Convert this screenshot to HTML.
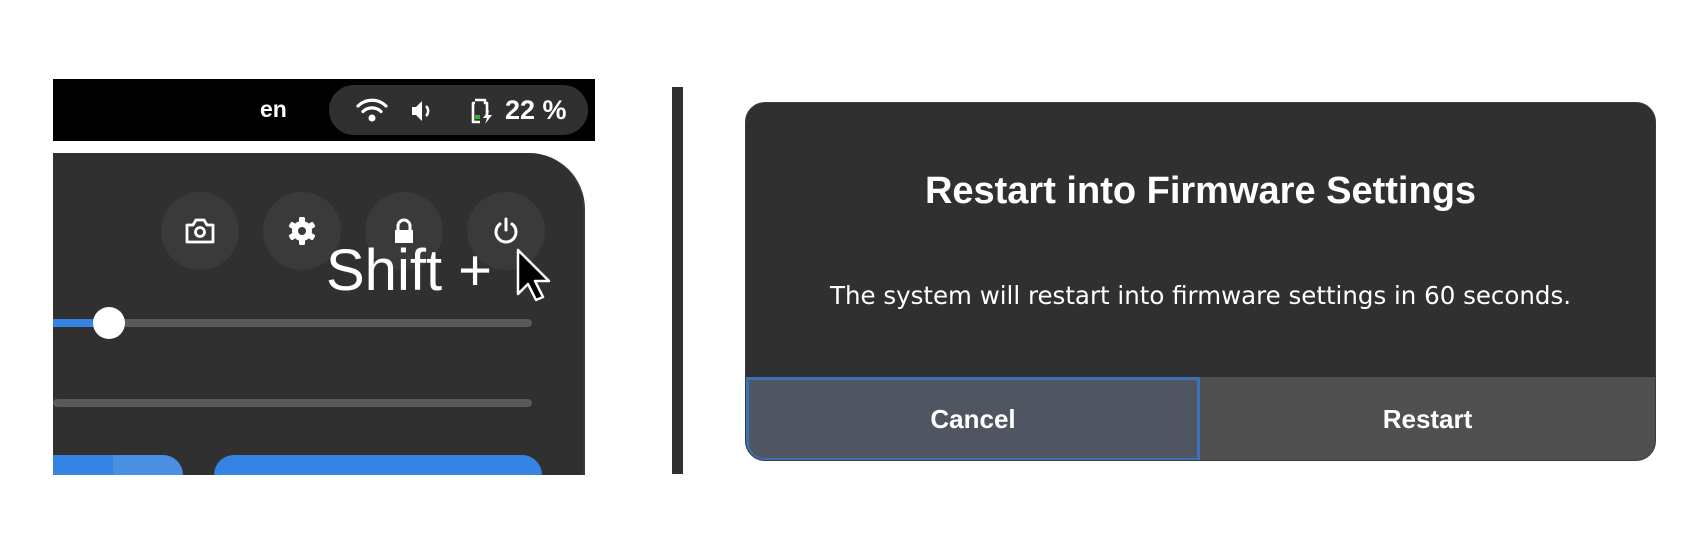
<!DOCTYPE html>
<html><head><style>
body{margin:0;width:1700px;height:550px;background:#fff;position:relative;overflow:hidden;font-family:"Liberation Sans",sans-serif}
.a{position:absolute}
</style></head><body>
<div class="a" style="left:53px;top:79px;width:542px;height:62px;background:#000"></div>
<div class="a" style="left:260px;top:96px;color:#fff;font-weight:bold;font-size:23px">en</div>
<div class="a" style="left:329px;top:85px;width:259px;height:50px;border-radius:25px;background:#303030"></div>
<svg class="a" style="left:355px;top:96px" width="34" height="30" viewBox="0 0 34 30"><g fill="none" stroke="#fff" stroke-width="3.2" stroke-linecap="round"><path d="M3 10 A20 20 0 0 1 31 10"/><path d="M8 15.5 A13 13 0 0 1 26 15.5"/></g><circle cx="17" cy="22" r="3.5" fill="#fff"/></svg>
<svg class="a" style="left:410px;top:98px" width="22" height="26" viewBox="0 0 22 26"><path d="M2 9h4l6-6v20l-6-6H2z" fill="#fff"/><path d="M16 8a7 7 0 0 1 0 10" fill="none" stroke="#fff" stroke-width="2.5"/></svg>
<svg class="a" style="left:467px;top:95px" width="32" height="32" viewBox="0 0 32 32"><path d="M8 5h10v3h2v12M13 27H6V8h2" fill="none" stroke="#fff" stroke-width="2.6" stroke-linejoin="round"/><rect x="8" y="20" width="5" height="4" fill="#3bb13b"/><path d="M22 15l-6 8h4l-2 6 7-9h-4z" fill="#fff"/></svg>
<div class="a" style="left:505px;top:95px;color:#fff;font-weight:bold;font-size:27px">22 %</div>

<div class="a" style="left:53px;top:153px;width:530px;height:322px;background:#303030;border-top-right-radius:56px;border-right:2px solid #3a3a3a"></div>
<div class="a" style="left:161px;top:192px;width:78px;height:78px;border-radius:50%;background:#3a3a3a"></div>
<div class="a" style="left:263px;top:192px;width:78px;height:78px;border-radius:50%;background:#3a3a3a"></div>
<div class="a" style="left:365px;top:192px;width:78px;height:78px;border-radius:50%;background:#3a3a3a"></div>
<div class="a" style="left:467px;top:192px;width:78px;height:78px;border-radius:50%;background:#3a3a3a"></div>
<svg class="a" style="left:184px;top:215px" width="32" height="32" viewBox="0 0 32 32"><path d="M3 10h6l3-5h8l3 5h6v17H3z" fill="none" stroke="#fff" stroke-width="2.8" stroke-linejoin="round"/><circle cx="16" cy="17" r="4.5" fill="none" stroke="#fff" stroke-width="2.8"/></svg>
<svg class="a" style="left:287px;top:216px" width="30" height="30" viewBox="0 0 30 30"><g fill="#fff"><circle cx="15" cy="15" r="10"/><rect x="12" y="1" width="6" height="28" rx="1.5"/><rect x="12" y="1" width="6" height="28" rx="1.5" transform="rotate(60 15 15)"/><rect x="12" y="1" width="6" height="28" rx="1.5" transform="rotate(120 15 15)"/></g><circle cx="15" cy="15" r="4" fill="#3a3a3a"/></svg>
<svg class="a" style="left:389px;top:216px" width="30" height="30" viewBox="0 0 30 30"><path d="M9 14v-4a6 6 0 0 1 12 0v4" fill="none" stroke="#fff" stroke-width="3"/><rect x="6" y="14" width="18" height="13" fill="#fff"/></svg>
<svg class="a" style="left:491px;top:216px" width="30" height="30" viewBox="0 0 30 30"><path d="M15 3v11" stroke="#fff" stroke-width="3" stroke-linecap="round"/><path d="M9 8a10 10 0 1 0 12 0" fill="none" stroke="#fff" stroke-width="3" stroke-linecap="round"/></svg>
<div class="a" style="left:326px;top:237px;color:#fff;font-size:58px;font-family:'Liberation Sans',sans-serif">Shift +</div>
<svg class="a" style="left:516px;top:248px" width="36" height="54" viewBox="0 0 36 54"><path d="M2 2v44l10-10 8 16 7-3-8-16h14z" fill="#000" stroke="#fff" stroke-width="2.5" stroke-linejoin="round"/></svg>

<div class="a" style="left:53px;top:319px;width:479px;height:8px;border-radius:4px;background:#5a5a5a"></div>
<div class="a" style="left:53px;top:319px;width:56px;height:8px;background:#3584e4"></div>
<div class="a" style="left:93px;top:307px;width:32px;height:32px;border-radius:50%;background:#fff"></div>
<div class="a" style="left:53px;top:399px;width:479px;height:8px;border-radius:4px;background:#5a5a5a"></div>
<div class="a" style="left:53px;top:455px;width:130px;height:20px;background:#4a90e2;border-top-right-radius:40px"></div>
<div class="a" style="left:53px;top:455px;width:60px;height:20px;background:#3584e4"></div>
<div class="a" style="left:214px;top:455px;width:328px;height:20px;background:#3584e4;border-radius:36px 36px 0 0"></div>

<div class="a" style="left:672px;top:87px;width:11px;height:387px;background:#303030"></div>

<div class="a" style="left:745px;top:102px;width:909px;height:357px;border-radius:20px;background:#303030;border:1px solid #3c3c3c;overflow:hidden">
<div class="a" style="left:0;right:0;top:67px;text-align:center;color:#fff;font-weight:bold;font-size:38px">Restart into Firmware Settings</div>
<div class="a" style="left:0;right:0;top:178px;text-align:center;color:#fff;font-family:'DejaVu Sans',sans-serif;font-size:24.5px">The system will restart into firmware settings in 60 seconds.</div>
<div class="a" style="left:0;top:274px;width:448px;height:78px;background:#4f5661;border:3px solid #3b72b5;color:#fff;font-weight:bold;font-size:26px;text-align:center;line-height:78px;border-bottom-left-radius:18px">Cancel</div>
<div class="a" style="left:454px;top:274px;width:455px;height:84px;background:#505050;color:#fff;font-weight:bold;font-size:26px;text-align:center;line-height:84px">Restart</div>
</div>
</body></html>
